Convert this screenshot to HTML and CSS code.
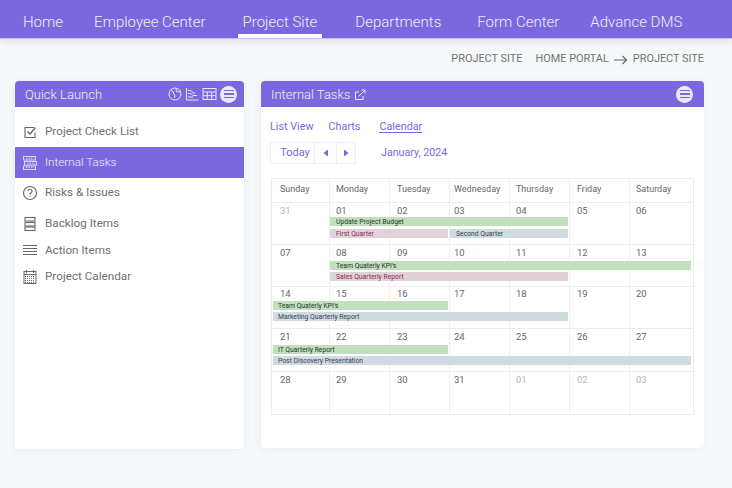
FILE: index.html
```html
<!DOCTYPE html>
<html lang="en">
<head>
<meta charset="utf-8">
<title>Internal Tasks</title>
<link rel="stylesheet" href="styles.css">
</head>
<body>
<header class="topnav">
  <a class="nav-link nav-home">Home</a>
  <a class="nav-link nav-emp">Employee Center</a>
  <a class="nav-link nav-active">Project Site</a>
  <a class="nav-link nav-dep">Departments</a>
  <a class="nav-link nav-form">Form Center</a>
  <a class="nav-link nav-dms">Advance DMS</a>
</header>
<div class="crumbs">
  <span class="crumb-title">PROJECT SITE</span>
  <span>HOME PORTAL</span>
  <svg class="crumb-arrow" width="14" height="10" viewBox="0 0 14 10"><path d="M0 5h12.5M8.5 1l4 4-4 4" fill="none" stroke="#666" stroke-width="1.1"/></svg>
  <span>PROJECT SITE</span>
</div>
<main class="content">
  <aside class="panel side">
    <div class="panel-head">
      <span class="panel-title">Quick Launch</span>
      <span class="head-tools tools-side">
        <svg width="14" height="14" viewBox="0 0 14 14" fill="none" stroke="#e9e5fa" stroke-width="1"><circle cx="7" cy="7" r="6"/><path d="M3 3.5l2.5 1.5 0 2 1.5 1-.5 3M8.5 1.5L8 4l2 1 2.5-.5"/></svg>
        <svg width="14" height="14" viewBox="0 0 14 14" fill="none" stroke="#e9e5fa" stroke-width="1"><path d="M1.5 1v12h12M3 3.500h3l2 2.500h2M3 6.500h3l2 2h4M3 10h5"/></svg>
        <svg width="15" height="14" viewBox="0 0 15 14" fill="none" stroke="#e9e5fa" stroke-width="1"><rect x="1" y="1.5" width="13" height="11"/><path d="M1 5h13M1 8.700h13M5.300 5v7.500M9.700 5v7.500"/></svg>
        <span class="round-menu"><i></i><i></i><i></i></span>
      </span>
    </div>
    <nav class="side-list">
      <a class="side-item item-check">
        <svg class="side-icon" width="16" height="16" viewBox="0 0 16 16" fill="none" stroke="#666" stroke-width="1.100"><path d="M13 8.500V13.500H3V3.500H12"/><path d="M5.500 7.500l2.500 2.500 5.500-6.500" stroke-width="1.300"/></svg>
        <span class="side-text">Project Check List</span>
      </a>
      <a class="side-item item-active">
        <svg class="side-icon" width="16" height="16" viewBox="0 0 16 16" fill="none" stroke="#dcd6f8" stroke-width="1"><rect x="1.500" y="1.500" width="12" height="3.500"/><rect x="2.500" y="6.500" width="12" height="3.500"/><rect x="1.500" y="11" width="12" height="3.500"/><path d="M4 3.200h8M5 8.200h8M4 12.700h8" stroke-dasharray="1.500 1"/></svg>
        <span class="side-text">Internal Tasks</span>
      </a>
      <a class="side-item item-risk">
        <svg class="side-icon" width="16" height="16" viewBox="0 0 16 16" fill="none" stroke="#666" stroke-width="1.100"><circle cx="8" cy="8" r="6.500"/><path d="M6 6.300c0-2.700 4-2.700 4 0 0 1.500-2 1.500-2 3.200"/><path d="M8 10.800v1.200"/></svg>
        <span class="side-text">Risks &amp; Issues</span>
      </a>
      <a class="side-item item-backlog">
        <svg class="side-icon" width="16" height="16" viewBox="0 0 16 16" fill="none" stroke="#666" stroke-width="1.100"><rect x="3" y="1.500" width="10" height="3.500"/><rect x="3" y="6.500" width="10" height="3.500"/><rect x="3" y="11" width="10" height="3.500"/></svg>
        <span class="side-text">Backlog Items</span>
      </a>
      <a class="side-item item-action">
        <svg class="side-icon" width="16" height="16" viewBox="0 0 16 16" fill="none" stroke="#666" stroke-width="1.100"><path d="M1 2.500h14M1 5.500h14M1 8.500h14M1 11.500h14"/></svg>
        <span class="side-text">Action Items</span>
      </a>
      <a class="side-item item-cal">
        <svg class="side-icon" width="16" height="16" viewBox="0 0 16 16" fill="none" stroke="#666" stroke-width="1"><rect x="2" y="2.500" width="12" height="12"/><path d="M2 5.500h12M4.500 1v3M11.500 1v3"/><path d="M3 7.500h10M3 9.500h10M3 11.500h10M3 13.500h10" stroke-dasharray="1 1"/></svg>
        <span class="side-text">Project Calendar</span>
      </a>
    </nav>
  </aside>

  <section class="panel tasks">
    <div class="panel-head">
      <span class="panel-title">Internal Tasks
        <svg class="ext-icon" width="12" height="12" viewBox="0 0 12 12" fill="none" stroke="#e9e5fa" stroke-width="1"><path d="M9 7v3.500H1.500V3H5"/><path d="M4.500 7.500L10.500 1.500M7.500 1h3.500v3.500"/></svg>
      </span>
      <span class="head-tools tools-tasks"><span class="round-menu"><i></i><i></i><i></i></span></span>
    </div>
    <div class="tasks-body">
      <div class="tabs">
        <a class="tab">List View</a>
        <a class="tab">Charts</a>
        <a class="tab tab-active">Calendar</a>
      </div>
      <div class="cal-toolbar">
        <div class="btn-group">
          <button class="cal-btn btn-today">Today</button>
          <button class="cal-btn btn-prev"><svg width="6" height="8" viewBox="0 0 6 8"><path d="M5 0.500v7L0.500 4z" fill="#7b68de"/></svg></button>
          <button class="cal-btn btn-next"><svg width="6" height="8" viewBox="0 0 6 8"><path d="M1 0.500v7L5.500 4z" fill="#7b68de"/></svg></button>
        </div>
        <span class="cal-month">January, 2024</span>
      </div>
      <div class="cal">
        <div class="cal-row cal-head">
          <div class="hcell c1">Sunday</div><div class="hcell c2">Monday</div><div class="hcell c3">Tuesday</div><div class="hcell c4">Wednesday</div><div class="hcell c5">Thursday</div><div class="hcell c6">Friday</div><div class="hcell c7">Saturday</div>
        </div>
        <div class="cal-row week w1">
          <div class="day c1 muted">31</div><div class="day c2">01</div><div class="day c3">02</div><div class="day c4">03</div><div class="day c5">04</div><div class="day c6">05</div><div class="day c7">06</div>
          <div class="bar green r2 from2 to6">Update Project Budget</div>
          <div class="bar rose r3 from2 to4">First Quarter</div>
          <div class="bar blue r3 from4 to6">Second Quarter</div>
        </div>
        <div class="cal-row week w2">
          <div class="day c1">07</div><div class="day c2">08</div><div class="day c3">09</div><div class="day c4">10</div><div class="day c5">11</div><div class="day c6">12</div><div class="day c7">13</div>
          <div class="bar green r2 from2 to8">Team Quaterly KPI's</div>
          <div class="bar rose r3 from2 to6">Sales Quarterly Report</div>
        </div>
        <div class="cal-row week w3">
          <div class="day c1">14</div><div class="day c2">15</div><div class="day c3">16</div><div class="day c4">17</div><div class="day c5">18</div><div class="day c6">19</div><div class="day c7">20</div>
          <div class="bar green r2 from1 to4">Team Quaterly KPI's</div>
          <div class="bar blue r3 from1 to6">Marketing Quarterly Report</div>
        </div>
        <div class="cal-row week w4">
          <div class="day c1">21</div><div class="day c2">22</div><div class="day c3">23</div><div class="day c4">24</div><div class="day c5">25</div><div class="day c6">26</div><div class="day c7">27</div>
          <div class="bar green r2 from1 to4">IT Quarterly Report</div>
          <div class="bar blue r3 from1 to8">Post Discovery Presentation</div>
        </div>
        <div class="cal-row week w5">
          <div class="day c1">28</div><div class="day c2">29</div><div class="day c3">30</div><div class="day c4">31</div><div class="day c5 muted">01</div><div class="day c6 muted">02</div><div class="day c7 muted">03</div>
        </div>
      </div>
    </div>
  </section>
</main>
</body>
</html>
```
FILE: styles.css
```css
* { box-sizing: border-box; }
html, body { margin: 0; padding: 0; }
body {
  width: 732px;
  height: 488px;
  overflow: hidden;
  background: #f5f9fa;
  font-family: Roboto, "Liberation Sans", sans-serif;
  color: #666;
}
.topnav {
  display: flex;
  height: 39px;
  background: #7b68de;
  border-bottom: 1px solid #c9c2ee;
  box-shadow: 0 3px 6px rgba(120, 130, 150, .18);
  padding-left: 18px;
}
.nav-link {
  display: block;
  height: 38px;
  padding: 13px 5px 0;
  color: #f0eefc;
  font-size: 15px;
  font-weight: 300;
  line-height: 19px;
  white-space: nowrap;
}
.nav-emp { margin-left: 21px; }
.nav-active { margin-left: 27px; border-bottom: 4px solid #fff; }
.nav-dep { margin-left: 28px; }
.nav-form { margin-left: 26px; }
.nav-dms { margin-left: 21px; }

.crumbs {
  display: flex;
  justify-content: flex-end;
  align-items: center;
  height: 14px;
  margin-top: 13px;
  padding-right: 28px;
  font-size: 10.900px;
  font-weight: 400;
  line-height: 14px;
  color: #737373;
}
.crumb-title { margin-right: 13px; }
.crumb-arrow { margin: 1px 5px 0 5px; }

.content {
  display: flex;
  gap: 17px;
  margin-top: 15px;
  padding-left: 15px;
}
.panel {
  background: #fff;
  border-radius: 4px;
  box-shadow: 0 1px 8px rgba(140, 150, 170, .12);
  overflow: hidden;
}
.side { width: 229px; height: 368px; }
.tasks { width: 443px; height: 367px; }
.panel-head {
  display: flex;
  align-items: center;
  justify-content: space-between;
  height: 26px;
  background: #7b68de;
  padding: 0 10px;
  color: #f0eefc;
  font-size: 13px;
  font-weight: 300;
}
.panel-title { display: flex; align-items: center; gap: 4px; }
.ext-icon { margin-top: 1px; }
.head-tools { display: flex; align-items: center; gap: 3px; }
.tools-side { margin-right: -3px; }
.tools-tasks { margin-right: 1px; }
.round-menu {
  display: flex;
  flex-direction: column;
  justify-content: center;
  align-items: center;
  gap: 2px;
  width: 17px;
  height: 17px;
  border-radius: 50%;
  background: #ebe8fa;
}
.round-menu i { display: block; width: 10px; height: 1.500px; background: #7b68de; }

.side-list { display: flex; flex-direction: column; padding-top: 10px; }
.side-item {
  display: flex;
  align-items: center;
  gap: 7px;
  padding-left: 7px;
  font-size: 11.700px;
  font-weight: 400;
  color: #707070;
}
.side-icon { flex: none; }
.side-text { margin-bottom: 2px; }
.item-check { height: 30px; }
.item-active { height: 31px; background: #7b68de; color: #f0eefc; font-weight: 300; }
.item-risk { height: 30px; }
.item-backlog { height: 31px; }
.item-action { height: 23px; }
.item-cal { height: 29px; }

.tasks-body { padding: 0 10px 0 9px; }
.tabs {
  display: flex;
  height: 35px;
  padding-top: 13px;
  font-size: 10.800px;
  color: #7b68de;
}
.tab { height: 13px; line-height: 14px; margin-right: 15px; font-weight: 400; }
.tab-active { margin-left: 4px; border-bottom: 1px solid #7b68de; }
.cal-toolbar { display: flex; align-items: center; height: 22px; }
.btn-group { display: flex; height: 22px; border: 1px solid #eee; }
.cal-btn {
  display: flex;
  align-items: center;
  justify-content: center;
  height: 20px;
  border: 0;
  border-left: 1px solid #eee;
  background: #fff;
  padding: 0;
  font-family: inherit;
  font-size: 11px;
  color: #7b68de;
}
.btn-today { width: 43px; border-left: 0; padding: 0 0 2px 5px; }
.btn-prev { width: 22px; }
.btn-next { width: 19px; }
.cal-month { margin-left: 25px; padding-bottom: 2px; font-size: 10.700px; color: #7b68de; }

.cal { margin: 14px 0 0 1px; width: 423px; border: 1px solid #ececec; }
.cal-row {
  display: grid;
  grid-template-columns: 58px 60px 60px 60px 60px 60px 63px;
}
.cal-head { height: 24px; border-bottom: 1px solid #ececec; }
.hcell {
  padding: 4px 0 0 7px;
  border-right: 1px solid #eee;
  font-size: 9px;
  line-height: 13px;
  color: #666;
}
.hcell.c1 { padding-left: 8px; }
.hcell.c2 { padding-left: 6px; }
.hcell.c4 { padding-left: 4px; }
.hcell.c5 { padding-left: 6px; }
.hcell.c7 { border-right: 0; padding-left: 6px; }
.week {
  height: 42px;
  border-bottom: 1px solid #ececec;
}
.w1 { grid-template-rows: 14px 9px 3px 9px 1fr; }
.w2 { grid-template-rows: 16px 9px 2px 9px 1fr; }
.w3 { grid-template-rows: 14px 9px 2px 9px 1fr; }
.w4 { grid-template-rows: 16px 9px 2px 9px 1fr; height: 43px; }
.w5 { border-bottom: 0; }
.day {
  grid-row: 1 / -1;
  padding: 2px 0 0 7px;
  border-right: 1px solid #f0f0f0;
  font-size: 9.500px;
  line-height: 12px;
  color: #666;
}
.w3 .day { padding-top: 1px; }
.day.c1 { padding-left: 8px; }
.day.c2 { padding-left: 6px; }
.day.c4 { padding-left: 4px; }
.day.c5 { padding-left: 6px; }
.day.c7 { border-right: 0; padding-left: 6px; }
.day.muted { color: #b5b5b5; }
.c1 { grid-column: 1; }
.c2 { grid-column: 2; }
.c3 { grid-column: 3; }
.c4 { grid-column: 4; }
.c5 { grid-column: 5; }
.c6 { grid-column: 6; }
.c7 { grid-column: 7; }
.bar {
  z-index: 1;
  height: 9px;
  padding-left: 6px;
  font-size: 6.800px;
  line-height: 10px;
  white-space: nowrap;
  overflow: hidden;
  color: #26362a;
}
.r2 { grid-row: 2; }
.r3 { grid-row: 4; }
.from1 { grid-column-start: 1; margin-left: 1px; padding-left: 5px; }
.from2 { grid-column-start: 2; }
.from4 { grid-column-start: 4; }
.to4 { grid-column-end: 4; margin-right: 2px; }
.to6 { grid-column-end: 6; margin-right: 2px; }
.to8 { grid-column-end: 8; margin-right: 2px; }
.green { background: #c1e0bc; }
.rose { background: #e0d2d8; color: #8c2a52; }
.blue { background: #d0dbe1; color: #2f3f50; }
```
